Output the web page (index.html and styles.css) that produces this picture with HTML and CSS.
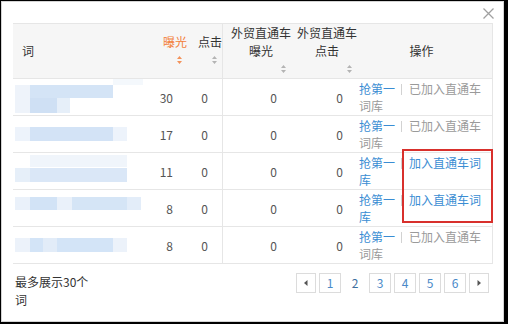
FILE: index.html
```html
<!DOCTYPE html>
<html lang="zh-CN">
<head>
<meta charset="utf-8">
<title>词列表</title>
<link rel="stylesheet" href="styles.css">
</head>
<body>
<div class="dialog">
  <span class="close" aria-label="关闭">
    <svg width="11" height="11" viewBox="0 0 11 11"><path d="M0.5 0.5L10.5 10.5M10.5 0.5L0.5 10.5" stroke="#a0a0a0" stroke-width="1.3" fill="none"/></svg>
  </span>

  <table class="grid">
    <colgroup>
      <col class="w-word"><col class="w-imp"><col class="w-clk"><col class="w-fimp"><col class="w-fclk"><col class="w-op">
    </colgroup>
    <thead>
      <tr>
        <th class="h-word">词</th>
        <th class="h-num sorted"><div class="hd"><span class="hd-text">曝光</span><span class="sort"><svg width="5" height="8" viewBox="0 0 5 8"><path d="M2.5 0L5 3H0zM2.5 8L0 5H5z"/></svg></span></div></th>
        <th class="h-num"><div class="hd"><span class="hd-text">点击</span><span class="sort"><svg width="5" height="8" viewBox="0 0 5 8"><path d="M2.5 0L5 3H0zM2.5 8L0 5H5z"/></svg></span></div></th>
        <th class="h-num divider"><div class="hd"><span class="hd-text">外贸直通车<br>曝光</span><span class="sort"><svg width="5" height="8" viewBox="0 0 5 8"><path d="M2.5 0L5 3H0zM2.5 8L0 5H5z"/></svg></span></div></th>
        <th class="h-num"><div class="hd"><span class="hd-text">外贸直通车<br>点击</span><span class="sort"><svg width="5" height="8" viewBox="0 0 5 8"><path d="M2.5 0L5 3H0zM2.5 8L0 5H5z"/></svg></span></div></th>
        <th class="h-op">操作</th>
      </tr>
    </thead>
    <tbody>
      <tr>
        <td class="word"><svg class="blur" width="137" height="36" viewBox="0 0 137 36">
          <rect x="100" y="0" width="30" height="6" fill="#f4f8fc"/>
          <rect x="2" y="6" width="15" height="28" fill="#eef3fa"/>
          <rect x="17" y="6" width="83" height="13" fill="#d4e4f6"/>
          <rect x="17" y="19" width="27" height="15" fill="#cfe0f4"/>
          <rect x="44" y="19" width="13" height="15" fill="#e6eff9"/>
        </svg></td>
        <td class="num">30</td><td class="num">0</td><td class="num divider">0</td><td class="num">0</td>
        <td class="op"><span class="link">抢第一</span><span class="sep"></span><span class="muted">已加入直通车</span><span class="muted">词库</span></td>
      </tr>
      <tr>
        <td class="word"><svg class="blur" width="137" height="36" viewBox="0 0 137 36">
          <rect x="2" y="11" width="112" height="14" fill="#edf3fb"/>
          <rect x="17" y="11" width="83" height="14" fill="#d3e3f6"/>
        </svg></td>
        <td class="num">17</td><td class="num">0</td><td class="num divider">0</td><td class="num">0</td>
        <td class="op"><span class="link">抢第一</span><span class="sep"></span><span class="muted">已加入直通车</span><span class="muted">词库</span></td>
      </tr>
      <tr>
        <td class="word"><svg class="blur" width="137" height="36" viewBox="0 0 137 36">
          <rect x="17" y="2" width="97" height="12" fill="#f0f5fb"/>
          <rect x="2" y="15" width="112" height="14" fill="#e6eff9"/>
          <rect x="17" y="15" width="97" height="14" fill="#dae7f7"/>
        </svg></td>
        <td class="num">11</td><td class="num">0</td><td class="num divider">0</td><td class="num">0</td>
        <td class="op"><span class="link">抢第一</span><span class="sep"></span><span class="link">加入直通车词</span><span class="link">库</span></td>
      </tr>
      <tr>
        <td class="word"><svg class="blur" width="137" height="36" viewBox="0 0 137 36">
          <rect x="2" y="7" width="126" height="13" fill="#eaf1fa"/>
          <rect x="17" y="7" width="27" height="13" fill="#d2e3f6"/>
          <rect x="59" y="7" width="55" height="13" fill="#d5e5f6"/>
          <rect x="114" y="7" width="14" height="13" fill="#e3edf9"/>
        </svg></td>
        <td class="num">8</td><td class="num">0</td><td class="num divider">0</td><td class="num">0</td>
        <td class="op"><span class="link">抢第一</span><span class="sep"></span><span class="link">加入直通车词</span><span class="link">库</span></td>
      </tr>
      <tr>
        <td class="word"><svg class="blur" width="137" height="36" viewBox="0 0 137 36">
          <rect x="2" y="11" width="112" height="14" fill="#ecf2fa"/>
          <rect x="17" y="11" width="13" height="14" fill="#d3e4f7"/>
          <rect x="30" y="11" width="14" height="14" fill="#e2ecf8"/>
          <rect x="44" y="11" width="56" height="14" fill="#d3e4f7"/>
        </svg></td>
        <td class="num">8</td><td class="num">0</td><td class="num divider">0</td><td class="num">0</td>
        <td class="op"><span class="link">抢第一</span><span class="sep"></span><span class="muted">已加入直通车</span><span class="muted">词库</span></td>
      </tr>
    </tbody>
  </table>

  <div class="footer">
    <p class="note">最多展示30个词</p>
    <nav class="pager">
      <span class="pg arrow"><svg width="4" height="6" viewBox="0 0 4 6"><path d="M3.5 0V6L0 3z" fill="#555"/></svg></span>
      <span class="pg">1</span>
      <span class="pg current">2</span>
      <span class="pg">3</span>
      <span class="pg">4</span>
      <span class="pg">5</span>
      <span class="pg">6</span>
      <span class="pg arrow"><svg width="4" height="6" viewBox="0 0 4 6"><path d="M0.5 0V6L4 3z" fill="#555"/></svg></span>
    </nav>
  </div>

  <div class="highlight"></div>
</div>
</body>
</html>
```
FILE: styles.css
```css
html, body {
  margin: 0;
  padding: 0;
}
body {
  background: #000;
  width: 508px;
  height: 324px;
  overflow: hidden;
  font-family: "Noto Sans CJK SC", "Noto Sans", sans-serif;
  font-size: 12px;
  color: #333;
}
.dialog {
  position: relative;
  box-sizing: border-box;
  margin-left: 1px;
  top: 1px;
  width: 503px;
  height: 321px;
  background: #fff;
  border: 1px solid #d4d4d4;
  padding: 21px 10px 0 11px;
}
.close {
  position: absolute;
  left: 481px;
  top: 6px;
  width: 11px;
  height: 11px;
  line-height: 0;
}
.grid {
  width: 480px;
  table-layout: fixed;
  border-collapse: separate;
  border-spacing: 0;
  border-top: 1px solid #e6e6e6;
  border-right: 1px solid #e6e6e6;
}
.w-word { width: 137px; }
.w-imp { width: 37px; }
.w-clk { width: 35px; }
.w-fimp { width: 69px; }
.w-fclk { width: 66px; }
.w-op { width: 135px; }

thead tr { height: 55px; }
tbody tr { height: 37px; }

th {
  background: #f6f6f6;
  font-weight: normal;
  color: #333;
  padding: 0;
  vertical-align: middle;
  border-bottom: 1px solid #e6e6e6;
  line-height: 18px;
}
.h-word {
  text-align: left;
  padding-left: 9px;
}
.h-op {
  text-align: center;
  padding-right: 6px;
}
.hd {
  display: flex;
  flex-direction: column;
  align-items: flex-end;
}
.hd-text {
  text-align: center;
  white-space: nowrap;
}
.sort {
  display: flex;
  align-items: center;
  height: 18px;
  margin-right: 5px;
  fill: #b4b4b4;
}
.sorted .hd-text { color: #f3803a; }
.sorted .sort { fill: #f3925a; }

.divider { border-left: 1px solid #e6e6e6; }

td {
  padding: 0;
  border-bottom: 1px solid #e6e6e6;
  vertical-align: middle;
}
td.word { line-height: 0; }
.blur { display: block; }
td.num {
  text-align: right;
  padding-right: 14px;
  color: #555;
}
td.op {
  padding: 0 4px 0 2px;
  line-height: 17.5px;
  text-align: left;
}
.link { color: #3a8dd3; }
.muted { color: #9a9a9a; }
.sep {
  display: inline-block;
  width: 1px;
  height: 11px;
  background: #d2d2d2;
  margin: 0 7px 0 6px;
  vertical-align: -1px;
}

.footer {
  display: flex;
  justify-content: space-between;
  align-items: flex-start;
  margin-top: 9px;
  padding-left: 2px;
  padding-right: 4px;
}
.note {
  margin: 0;
  width: 76px;
  line-height: 18px;
  color: #333;
}
.pager {
  display: flex;
  gap: 3px;
}
.pg {
  box-sizing: border-box;
  width: 22px;
  height: 20px;
  border: 1px solid #dcdcdc;
  display: flex;
  align-items: center;
  justify-content: center;
  color: #4a89c8;
  font-size: 12px;
  line-height: 1;
}
.pg.arrow { width: 20px; }
.pg.current {
  border-color: transparent;
  color: #3f6f9e;
}

.highlight {
  position: absolute;
  left: 400px;
  top: 147px;
  width: 91px;
  height: 74px;
  box-sizing: border-box;
  border: 2px solid #d8302c;
}
```
